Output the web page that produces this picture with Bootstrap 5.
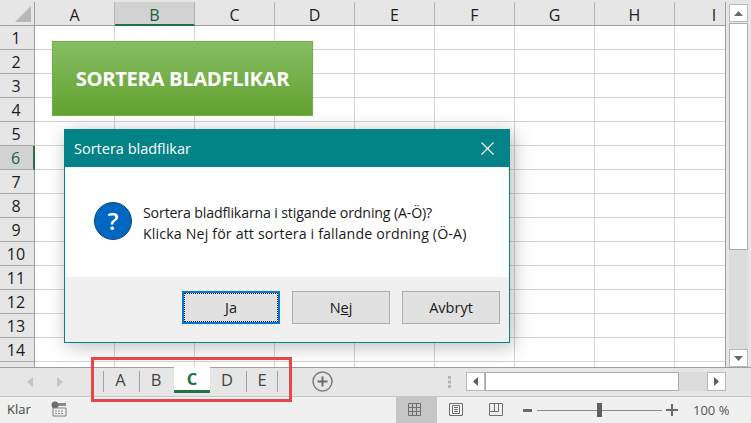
<!DOCTYPE html>
<html lang="sv">
<head>
<meta charset="utf-8">
<title>Sortera bladflikar</title>
<link rel="stylesheet" href="https://cdn.jsdelivr.net/npm/bootstrap@5.3.0/dist/css/bootstrap.min.css">
<style>
html,body{margin:0;height:100%;overflow:hidden}
body{width:751px;height:423px;background:#e6e6e6;font-family:"Open Sans","Noto Sans",sans-serif;color:#222}
.xl-app{position:relative;width:751px;height:423px;overflow:hidden}
.xl-main{height:367px;padding-top:2px;background:#e6e6e6}
.xl-sheet{width:726px;border-right:1px solid #9e9e9e}
.xl-colhead{height:24px;border-bottom:1px solid #9e9e9e;flex:none}
.xl-corner{width:35px;flex:none;position:relative;border-right:1px solid #9e9e9e}
.xl-corner svg{display:block;margin:4px 0 0 15px}
.xl-col{width:80px;flex:none;text-align:center;font-size:16px;line-height:26px;color:#1c1c1c;border-right:1px solid #b4b4b4}
.xl-col-last{width:50px;border-right:0;padding-left:28px}
.xl-col-on{background:#d2d2d2;border-bottom:2px solid #217346;height:24px;color:#17603c}
.xl-rowhead{width:35px;flex:none;border-right:1px solid #9e9e9e}
.xl-row{height:24px;flex:none;font-size:16px;line-height:25px;text-align:center;padding-right:2px;color:#1c1c1c;border-bottom:1px solid #a8a8a8}
.xl-row-on{background:#d2d2d2;color:#17603c;border-right:2px solid #217346;margin-right:-1px}
.xl-cells{background-color:#fff;background-image:linear-gradient(to right,#d4d4d4 1px,transparent 1px),linear-gradient(to bottom,#d4d4d4 1px,transparent 1px);background-size:80px 24px;background-position:79px 23px}
.xl-vbar{width:19px;margin:2px 0 0 3px}
.xl-arrowbtn{height:18px;background:#fff;border:1px solid #b9b9b9;flex:none}
.xl-vthumb{height:227px;margin-top:1px;background:#fff;border:1px solid #ababab;flex:none}
.xl-track{background:#dcdcdc}
.xl-tabs{height:29px;background:#e6e6e6;border-top:1px solid #9e9e9e;position:relative}
.xl-nav{width:103px;flex:none;padding-left:27px;gap:24px}
.xl-tab{height:24px;font-size:16.500px;line-height:23px;text-align:center;color:#444;position:relative;flex:none}
.xl-tab-a{width:36px;padding-right:2px}.xl-tab-b{width:35px;padding-right:2px}.xl-tab-d{width:36px;padding-right:2px}.xl-tab-e{width:32px}
.xl-tab-sep{border-left:1px solid #a3a3a3;height:21px;margin-top:3px;line-height:18px}
.xl-tab-bare{height:21px;margin-top:3px;line-height:18px}
.xl-tab-end{border-right:1px solid #a3a3a3}
.xl-tab-on{width:36px;background:#fff;margin-top:-1px;height:26px;border-bottom:3px solid #217346;font-weight:700;color:#217346;line-height:24px}
.xl-add{margin:3px 0 0 34px;flex:none}
.xl-dots{margin:8px 0 0 115px;flex:none}
.xl-hbar{margin:4px 0 0 14px;height:19px;width:260px;background:#dcdcdc;flex:none}
.xl-harrow{width:19px;background:#fff;border:1px solid #b9b9b9;flex:none}
.xl-hthumb{width:194px;background:#fff;border:1px solid #ababab;flex:none}
.xl-status{height:27px;background:#f0f0f0;border-top:1px solid #c6c6c6;font-size:13px;color:#444}
.xl-klar{width:51px;padding-left:7px;line-height:25px;flex:none}
.xl-viewon{width:41px;height:26px;background:#c6c6c6;margin-left:329px;flex:none}
.xl-view{width:41px;flex:none}
.xl-view-icon{margin:-2px 4px 0 0}
.xl-view-icon-far{margin:-2px 6px 0 0}
.xl-zoom-group{margin-left:4px}
.xl-zoom-line{width:125px;height:1px;background:#8a8a8a;position:relative;margin:0 4px}
.xl-zoom-thumb{position:absolute;left:60px;top:-7px;width:5px;height:14px;background:#5f5f5f}
.xl-pct{margin-left:15px;line-height:25px;font-size:13px;color:#555}
.xl-shape{position:absolute;left:52px;top:41px;width:261px;height:75px;background:linear-gradient(to bottom,#86bd63,#62a22f);border:1px solid #74ae4b;color:#fff;font-weight:700;font-size:20.200px;letter-spacing:-.35px;box-shadow:0 0 1px rgba(0,0,0,.1)}
.xl-dialog{position:absolute;left:64px;top:129px;width:446px;height:214px;background:#fff;border:1px solid #038387;box-shadow:3px 3px 18px rgba(0,0,0,.28)}
.xl-dialog-title{height:37px;background:#038387;color:#fff;font-size:14.500px;padding-left:9px;flex:none}
.xl-close{margin-right:15px}
.xl-dialog-body{height:110px;padding:35px 0 0 29px;gap:11px;flex:none;font-size:14.200px;line-height:21px;color:#1a1a1a}
.xl-line-a{display:block;letter-spacing:-.16px}
.xl-line-b{display:block;letter-spacing:.15px}
.xl-dialog-foot{height:65px;background:#f0f0f0;padding:14px 9px 0 117px;gap:12px;flex:none}
.xl-btn{width:98px;height:33px;padding:0;border-radius:0;background:#e1e1e1;border:1px solid #adadad;color:#1a1a1a;font-size:14.500px;line-height:30px}
.xl-btn-def{border:2px solid #0078d7;line-height:28px;outline:1px dotted #111;outline-offset:-3px}
.xl-note{position:absolute;left:91px;top:357px;width:201px;height:45px;border:3px solid #e8474a}
</style>
</head>
<body>
<div class="xl-app">
  <div class="xl-main d-flex">
    <div class="xl-sheet d-flex flex-column">
      <div class="xl-colhead d-flex">
        <div class="xl-corner"><svg width="17" height="17"><path d="M16 0V16H0Z" fill="#b8b8b8"/></svg></div>
        <div class="xl-col">A</div>
        <div class="xl-col xl-col-on">B</div>
        <div class="xl-col">C</div>
        <div class="xl-col">D</div>
        <div class="xl-col">E</div>
        <div class="xl-col">F</div>
        <div class="xl-col">G</div>
        <div class="xl-col">H</div>
        <div class="xl-col xl-col-last">I</div>
      </div>
      <div class="d-flex flex-grow-1 overflow-hidden">
        <div class="xl-rowhead d-flex flex-column">
          <div class="xl-row">1</div><div class="xl-row">2</div><div class="xl-row">3</div><div class="xl-row">4</div><div class="xl-row">5</div>
          <div class="xl-row xl-row-on">6</div>
          <div class="xl-row">7</div><div class="xl-row">8</div><div class="xl-row">9</div><div class="xl-row">10</div><div class="xl-row">11</div><div class="xl-row">12</div><div class="xl-row">13</div><div class="xl-row">14</div>
        </div>
        <div class="xl-cells flex-grow-1"></div>
      </div>
    </div>
    <div class="xl-vbar d-flex flex-column">
      <div class="xl-arrowbtn d-flex align-items-center justify-content-center"><svg width="9" height="5"><path d="M4.500 0L9 5H0Z" fill="#6a6a6a"/></svg></div>
      <div class="xl-vthumb"></div>
      <div class="xl-track flex-grow-1"></div>
      <div class="xl-arrowbtn d-flex align-items-center justify-content-center"><svg width="9" height="5"><path d="M0 0H9L4.500 5Z" fill="#6a6a6a"/></svg></div>
    </div>
  </div>

  <div class="xl-tabs d-flex">
    <div class="xl-nav d-flex align-items-center">
      <svg width="6" height="10"><path d="M6 0V10L0 5Z" fill="#c4c4c4"/></svg>
      <svg width="6" height="10"><path d="M0 0V10L6 5Z" fill="#c4c4c4"/></svg>
    </div>
    <div class="xl-tab xl-tab-a xl-tab-sep">A</div>
    <div class="xl-tab xl-tab-b xl-tab-sep">B</div>
    <div class="xl-tab xl-tab-on">C</div>
    <div class="xl-tab xl-tab-d xl-tab-bare">D</div>
    <div class="xl-tab xl-tab-e xl-tab-sep xl-tab-end">E</div>
    <svg class="xl-add" width="21" height="21"><circle cx="10.500" cy="10.500" r="9.500" fill="none" stroke="#7d7d7d" stroke-width="1.500"/><path d="M10.500 5.500v10M5.500 10.500h10" stroke="#6a6a6a" stroke-width="2"/></svg>
    <svg class="xl-dots" width="4" height="12"><path d="M0 0h3v3H0zM0 4.500h3v3H0zM0 9h3v3H0z" fill="#b4b4b4"/></svg>
    <div class="xl-hbar d-flex">
      <div class="xl-harrow d-flex align-items-center justify-content-center"><svg width="5" height="9"><path d="M5 0V9L0 4.500Z" fill="#5f5f5f"/></svg></div>
      <div class="xl-hthumb"></div>
      <div class="flex-grow-1"></div>
      <div class="xl-harrow d-flex align-items-center justify-content-center"><svg width="5" height="9"><path d="M0 0V9L5 4.500Z" fill="#5f5f5f"/></svg></div>
    </div>
  </div>

  <div class="xl-status d-flex">
    <div class="xl-klar">Klar</div>
    <svg class="flex-none mt-1" width="16" height="16"><path d="M7 2h8v3H7z" fill="#8a8a8a"/><circle cx="4" cy="4" r="3.500" fill="#6b6b6b"/><path d="M2 7h13v8H2z" fill="#f0f0f0" stroke="#7d7d7d"/><path d="M4 10h9M4 12.500h9" stroke="#8a8a8a" stroke-dasharray="2 1"/></svg>
    <div class="xl-viewon d-flex align-items-center justify-content-center"><svg class="xl-view-icon" width="13" height="13"><path d="M.5.500h12v12H.5zM4.500.500v12M8.500.500v12M.5 4.500h12M.5 8.500h12" fill="none" stroke="#6f6f6f"/></svg></div>
    <div class="xl-view d-flex align-items-center justify-content-center"><svg class="xl-view-icon" width="14" height="13"><path d="M.5.500h13v12H.5z" fill="none" stroke="#6f6f6f"/><path d="M3.500 2.500h7v8h-7z" fill="none" stroke="#6f6f6f"/><path d="M5 4.500h4M5 6.500h4M5 8.500h4" stroke="#6f6f6f"/></svg></div>
    <div class="xl-view d-flex align-items-center justify-content-center"><svg class="xl-view-icon-far" width="14" height="13"><path d="M.5.500h13v12H.5zM.5 8.500h9V.5M5.500.500v8" fill="none" stroke="#6f6f6f"/></svg></div>
    <div class="xl-zoom-group d-flex align-items-center">
      <svg width="10" height="3"><path d="M0 0h9v3H0z" fill="#6a6a6a"/></svg>
      <div class="xl-zoom-line"><div class="xl-zoom-thumb"></div></div>
      <svg width="12" height="12"><path d="M5 0h2v5h5v2H7v5H5V7H0V5h5z" fill="#6a6a6a"/></svg>
      <div class="xl-pct">100 %</div>
    </div>
  </div>

  <div class="xl-shape d-flex align-items-center justify-content-center">SORTERA BLADFLIKAR</div>

  <div class="xl-dialog d-flex flex-column">
    <div class="xl-dialog-title d-flex align-items-center justify-content-between">
      <span>Sortera bladflikar</span>
      <svg class="xl-close" width="13" height="13"><path d="M.5.500l12 12M12.500.500l-12 12" stroke="#fff" stroke-width="1.100"/></svg>
    </div>
    <div class="xl-dialog-body d-flex">
      <svg class="flex-none" width="38" height="38" viewBox="0 0 38 38"><circle cx="19" cy="19" r="18.500" fill="#0067c0" stroke="#0b4a8a"/><text x="19" y="27.500" text-anchor="middle" fill="#fff" font-family="Open Sans" font-weight="600" font-size="24">?</text></svg>
      <div><span class="xl-line-a">Sortera bladflikarna i stigande ordning (A-Ö)?</span><span class="xl-line-b">Klicka Nej för att sortera i fallande ordning (Ö-A)</span></div>
    </div>
    <div class="xl-dialog-foot d-flex">
      <button class="btn xl-btn xl-btn-def" type="button"><u>J</u>a</button>
      <button class="btn xl-btn" type="button">N<u>e</u>j</button>
      <button class="btn xl-btn" type="button">Avbryt</button>
    </div>
  </div>

  <div class="xl-note"></div>
</div>
<script src="https://cdn.jsdelivr.net/npm/bootstrap@5.3.0/dist/js/bootstrap.bundle.min.js"></script>
</body>
</html>
